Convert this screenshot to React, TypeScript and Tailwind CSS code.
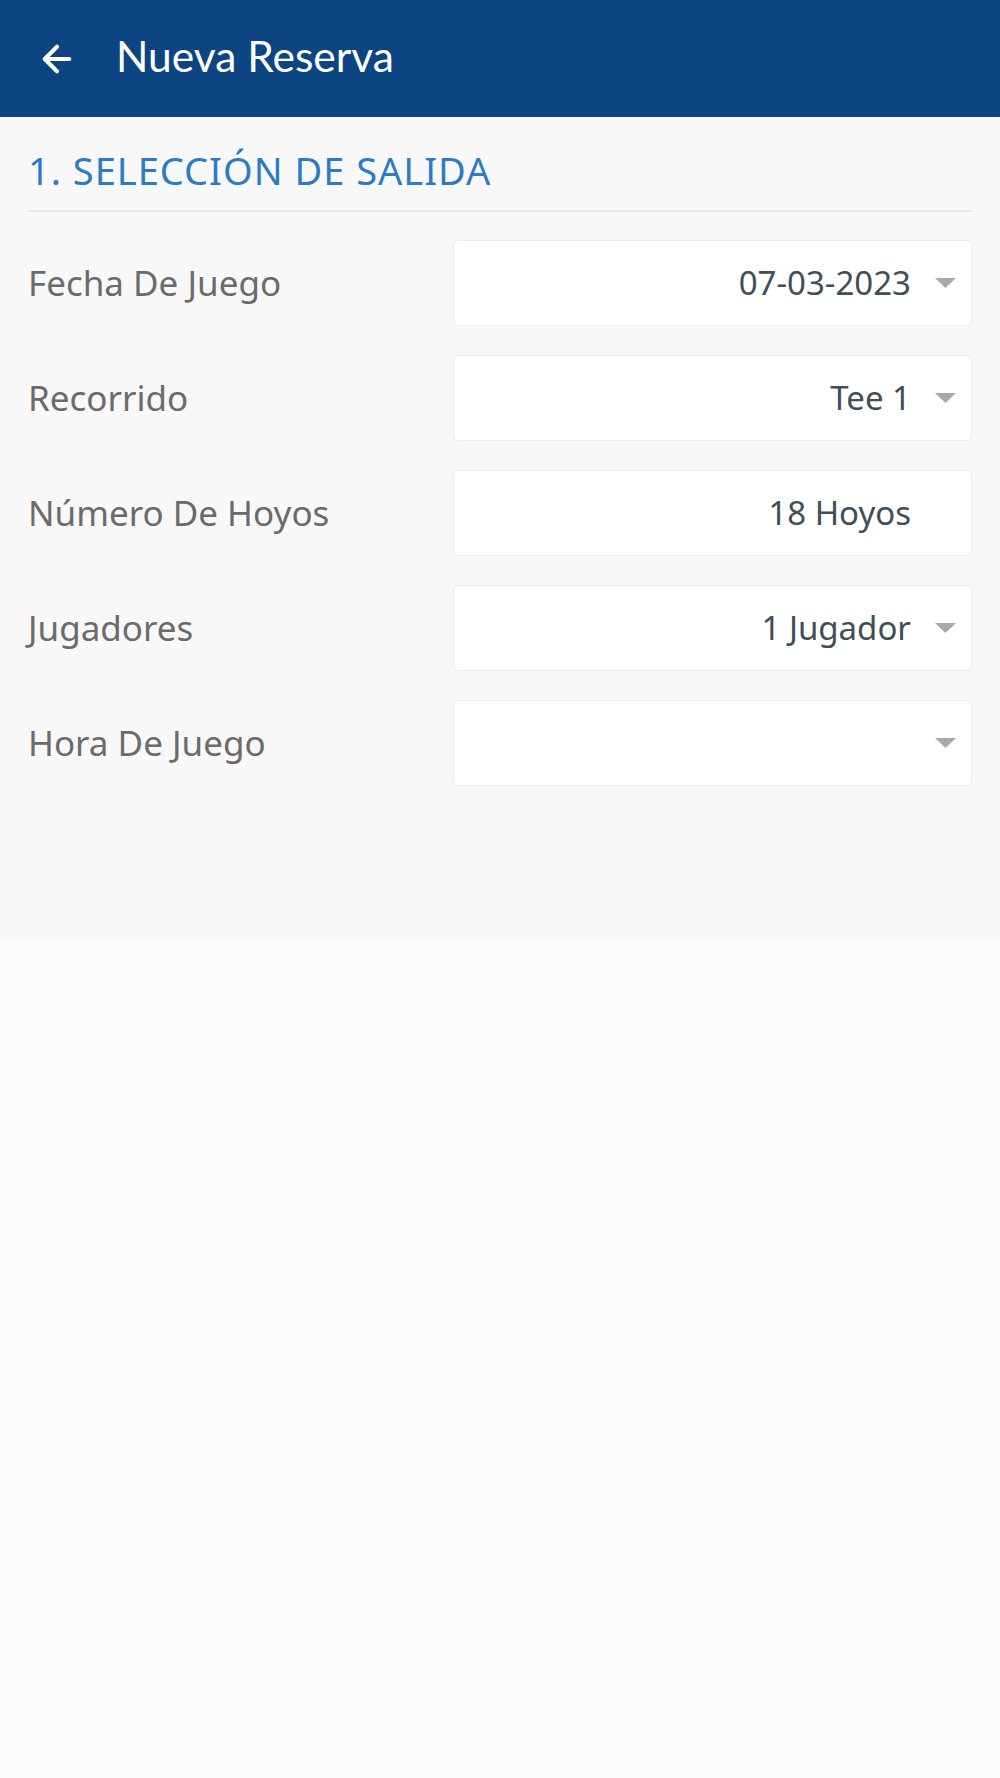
import { ArrowLeft } from "lucide-react";

interface Field {
  label: string;
  value: string;
  dropdown: boolean;
}

const fields: Field[] = [
  { label: "Fecha De Juego", value: "07-03-2023", dropdown: true },
  { label: "Recorrido", value: "Tee 1", dropdown: true },
  { label: "Número De Hoyos", value: "18 Hoyos", dropdown: false },
  { label: "Jugadores", value: "1 Jugador", dropdown: true },
  { label: "Hora De Juego", value: "", dropdown: true },
];

function Caret() {
  return (
    <svg width="21" height="10" viewBox="0 0 21 10" className="shrink-0">
      <path d="M0 0 L21 0 L10.5 10 Z" fill="#a9a9a9" />
    </svg>
  );
}

export default function App() {
  return (
    <div className="min-h-screen bg-[#fcfcfc] font-['Noto_Sans',sans-serif]">
      {/* App bar */}
      <header className="h-[117px] bg-[#0c4581] flex items-center pl-[36px]">
        <ArrowLeft size={42} strokeWidth={2.3} className="text-white" />
        <h1 className="ml-[38px] text-white text-[42.5px] leading-none font-['Lato',sans-serif] pb-[4px]">
          Nueva Reserva
        </h1>
      </header>

      <main className="h-[823px] bg-[#f8f8f8] px-[28px]">
        <h2 className="pt-[31px] text-[38px] leading-[44px] text-[#2b7bc6] tracking-[1px]">
          1. SELECCIÓN DE SALIDA
        </h2>
        <div className="mt-[18px] h-[2px] bg-[#e9e9e9]" />

        <div className="mt-[28px] flex flex-col gap-[29px]">
          {fields.map((f) => (
            <div key={f.label} className="flex items-center">
              <span className="flex-1 text-[35px] text-[#6b6b6b]">
                {f.label}
              </span>
              <div className="w-[519px] h-[86px] bg-white border border-[#ececec] rounded-[5px] flex items-center justify-end pr-[15px]">
                <span className="text-[33px] text-[#404e58]">{f.value}</span>
                <span className="w-[45px] flex justify-end">
                  {f.dropdown && <Caret />}
                </span>
              </div>
            </div>
          ))}
        </div>
      </main>
    </div>
  );
}
